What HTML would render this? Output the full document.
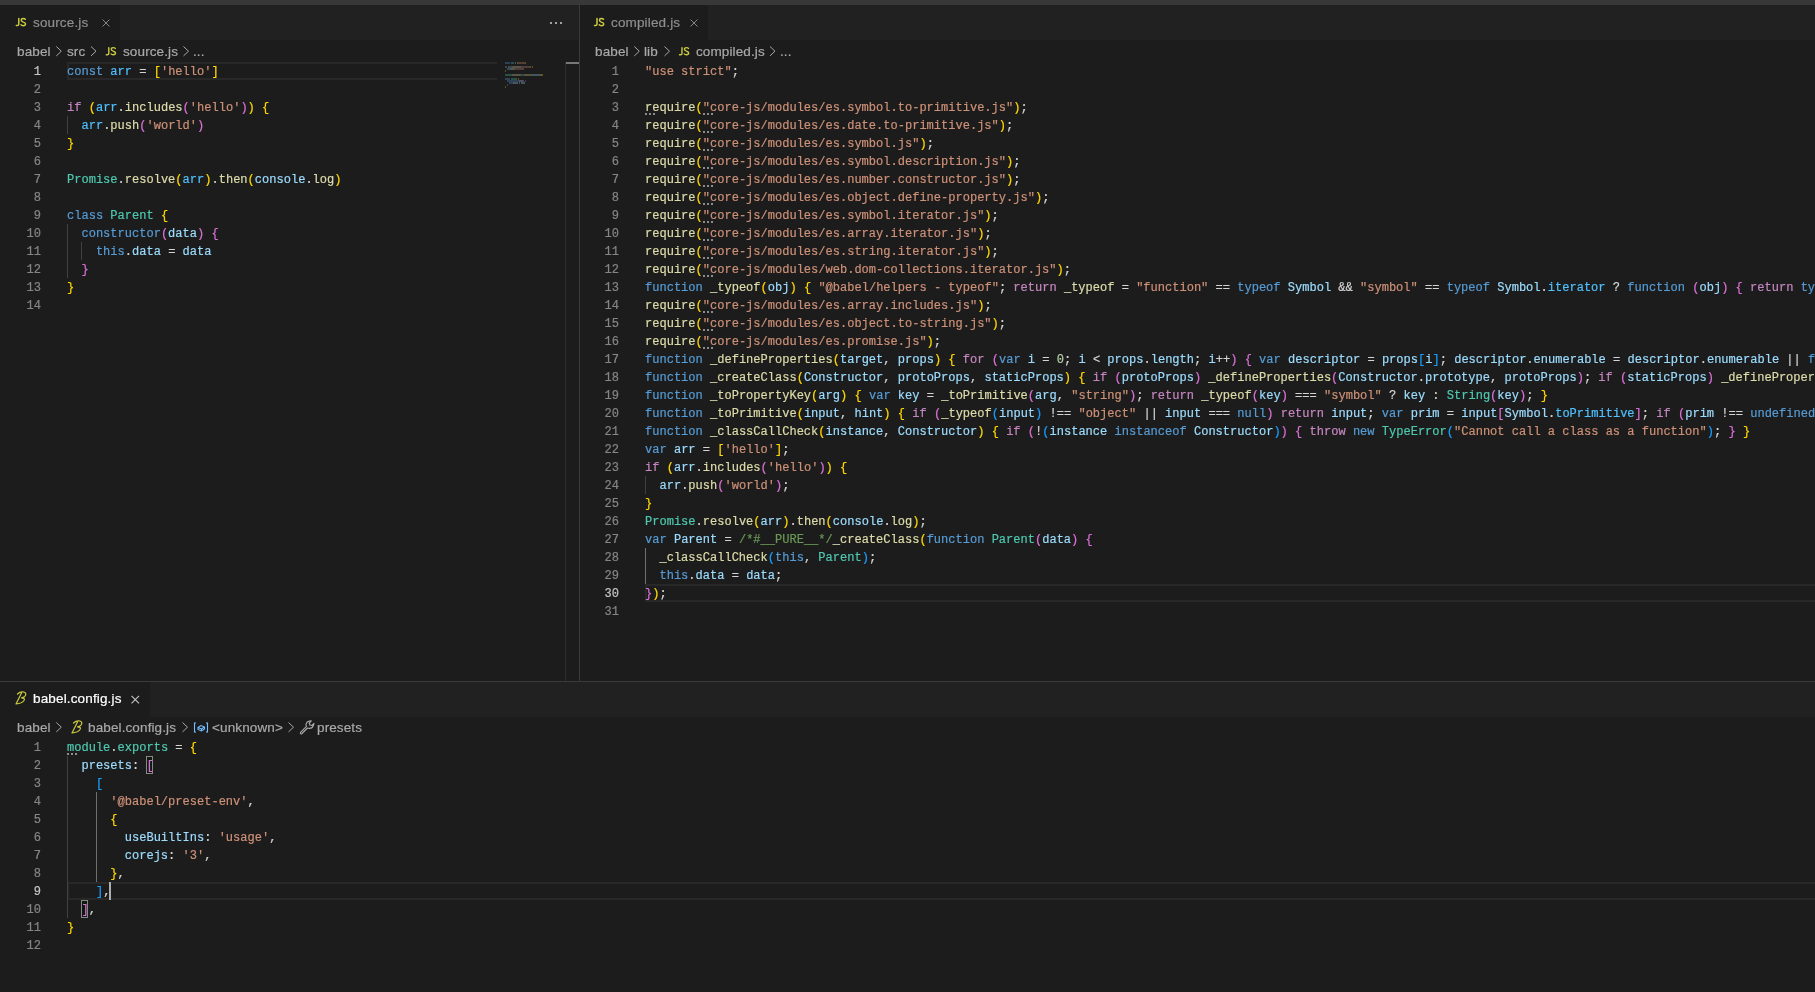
<!DOCTYPE html>
<html><head><meta charset="utf-8"><style>
html,body{margin:0;padding:0}
body{width:1815px;height:992px;overflow:hidden;position:relative;background:#1c1c1c;font-family:"Liberation Sans",sans-serif}
.abs{position:absolute}
.strip{left:0;top:0;width:1815px;height:5px;background:#383838}
.tabbar{background:#212121}
.tab{background:#1c1c1c}
.tt{position:absolute;font-size:13.5px;letter-spacing:0.15px;line-height:16px;color:#8e8e8e;white-space:pre;will-change:transform;-webkit-text-stroke:0.2px currentColor}
.bc{position:absolute;font-size:13.5px;letter-spacing:0.12px;line-height:16px;color:#a9a9a9;white-space:pre;will-change:transform;-webkit-text-stroke:0.2px currentColor}
.vdiv{background:#3a3a3a}
.cl,.ln{position:absolute;height:18px;line-height:18px;font-family:"Liberation Mono",monospace;font-size:12.04px;white-space:pre;color:#d4d4d4;will-change:transform;-webkit-text-stroke:0.2px currentColor}
.ln{text-align:right;color:#858585}
.ln.cur{color:#c6c6c6}
.k{color:#569cd6}.c{color:#c586c0}.v{color:#9cdcfe}.cv{color:#4fc1ff}.f{color:#dcdcaa}
.s{color:#ce9178}.t{color:#4ec9b0}.cm{color:#6a9955}.n{color:#b5cea8}
.b1{color:#ffd700}.b2{color:#da70d6}.b3{color:#179fff}
.hl{position:absolute;border:2px solid #282828;border-right:none;box-sizing:border-box;height:18px}
.guide{position:absolute;width:1px;background:#404040}
.guide.act{background:#707070}
.dots{position:absolute;height:2px;width:10px;background:repeating-linear-gradient(90deg,#8c8c8c 0 2px,transparent 2px 4px)}
svg{position:absolute;overflow:visible}

</style></head><body>
<div class="abs strip"></div>
<!-- ============ top-left group ============ -->
<div class="abs tabbar" style="left:0;top:5px;width:579px;height:35px"></div>
<div class="abs tab" style="left:0;top:5px;width:120px;height:35px"></div>
<svg style="left:0;top:0" width="1" height="1"><g fill="none" stroke="#cbcb41" stroke-width="1.5" stroke-linecap="round">
<path d="M18.8 18.5 V24 Q18.8 25.6 17.2 25.6 H16.3"/>
<path d="M25.3 19.3 Q24.6 18.5 23.2 18.5 Q21.3 18.5 21.3 20.2 Q21.3 21.5 23.3 22.1 Q25.5 22.7 25.5 24 Q25.5 25.7 23.2 25.7 Q21.8 25.7 21 24.8"/>
</g></svg>
<div class="tt" style="left:33px;top:15px">source.js</div>
<svg style="left:0;top:0" width="1" height="1"><g stroke="#858585" stroke-width="1"><path d="M102.5 19.5 L109.5 26.5 M109.5 19.5 L102.5 26.5"/></g></svg>
<svg style="left:0;top:0" width="1" height="1"><g fill="#a3a3a3"><rect x="550" y="22" width="2" height="2"/><rect x="555" y="22" width="2" height="2"/><rect x="560" y="22" width="2" height="2"/></g></svg>
<!-- breadcrumbs -->
<div class="bc" style="left:17px;top:44px">babel</div>
<svg style="left:0;top:0" width="1" height="1"><g fill="none" stroke="#a9a9a9" stroke-width="1"><path d="M56.3 46.5 L61.3 51.2 L56.3 55.9"/><path d="M91 46.5 L96 51.2 L91 55.9"/></g></svg>
<div class="bc" style="left:67px;top:44px">src</div>
<svg style="left:0;top:0" width="1" height="1"><g fill="none" stroke="#cbcb41" stroke-width="1.4" stroke-linecap="round">
<path d="M108.8 47.6 V53.2 Q108.8 54.8 107.2 54.8 H106.3"/>
<path d="M115.3 48.4 Q114.6 47.6 113.2 47.6 Q111.3 47.6 111.3 49.3 Q111.3 50.6 113.3 51.2 Q115.5 51.8 115.5 53.1 Q115.5 54.8 113.2 54.8 Q111.8 54.8 111 53.9"/>
</g></svg>
<div class="bc" style="left:123px;top:44px">source.js</div>
<svg style="left:0;top:0" width="1" height="1"><g fill="none" stroke="#a9a9a9" stroke-width="1"><path d="M183.5 46.5 L188.5 51.2 L183.5 55.9"/></g></svg>
<div class="bc" style="left:193px;top:44px">...</div>
<!-- ============ top-right group ============ -->
<div class="abs tabbar" style="left:580px;top:5px;width:1235px;height:35px"></div>
<div class="abs tab" style="left:580px;top:5px;width:128px;height:35px"></div>
<svg style="left:0;top:0" width="1" height="1"><g fill="none" stroke="#cbcb41" stroke-width="1.5" stroke-linecap="round">
<path d="M597 18.5 V24 Q597 25.6 595.4 25.6 H594.5"/>
<path d="M603.5 19.3 Q602.8 18.5 601.4 18.5 Q599.5 18.5 599.5 20.2 Q599.5 21.5 601.5 22.1 Q603.7 22.7 603.7 24 Q603.7 25.7 601.4 25.7 Q600 25.7 599.2 24.8"/>
</g></svg>
<div class="tt" style="left:611px;top:15px">compiled.js</div>
<svg style="left:0;top:0" width="1" height="1"><g stroke="#858585" stroke-width="1"><path d="M690.5 19.5 L697.5 26.5 M697.5 19.5 L690.5 26.5"/></g></svg>
<div class="bc" style="left:595px;top:44px">babel</div>
<svg style="left:0;top:0" width="1" height="1"><g fill="none" stroke="#a9a9a9" stroke-width="1"><path d="M634.3 46.5 L639.3 51.2 L634.3 55.9"/><path d="M664.5 46.5 L669.5 51.2 L664.5 55.9"/></g></svg>
<div class="bc" style="left:644px;top:44px">lib</div>
<svg style="left:0;top:0" width="1" height="1"><g fill="none" stroke="#cbcb41" stroke-width="1.4" stroke-linecap="round">
<path d="M682 47.6 V53.2 Q682 54.8 680.4 54.8 H679.5"/>
<path d="M688.5 48.4 Q687.8 47.6 686.4 47.6 Q684.5 47.6 684.5 49.3 Q684.5 50.6 686.5 51.2 Q688.7 51.8 688.7 53.1 Q688.7 54.8 686.4 54.8 Q685 54.8 684.2 53.9"/>
</g></svg>
<div class="bc" style="left:696px;top:44px">compiled.js</div>
<svg style="left:0;top:0" width="1" height="1"><g fill="none" stroke="#a9a9a9" stroke-width="1"><path d="M770 46.5 L775 51.2 L770 55.9"/></g></svg>
<div class="bc" style="left:780px;top:44px">...</div>
<!-- dividers / scrollbar -->
<div class="abs vdiv" style="left:579px;top:5px;width:1px;height:677px"></div>
<div class="abs vdiv" style="left:0;top:681px;width:1815px;height:1px"></div>
<div class="abs" style="left:565px;top:62px;width:1px;height:619px;background:#2e2e2e"></div>
<div class="abs" style="left:566px;top:62px;width:13px;height:2px;background:#787878"></div>
<!-- ============ bottom group ============ -->
<div class="abs tabbar" style="left:0;top:682px;width:1815px;height:35px"></div>
<div class="abs tab" style="left:0;top:682px;width:150px;height:35px"></div>
<svg style="left:0;top:0" width="1" height="1"><g fill="none" stroke="#cbcb41" stroke-width="1.2" stroke-linecap="round" stroke-linejoin="round">
<path d="M17.5 694 Q20 691.5 24 692 Q26.5 692.8 25.5 695.5 Q24.5 697.5 21.5 697.8 Q25.5 697.8 24 700.5 Q22 703.5 16 704 L21.5 693"/>
</g></svg>
<div class="tt" style="left:33px;top:691px;color:#ffffff">babel.config.js</div>
<svg style="left:0;top:0" width="1" height="1"><g stroke="#c5c5c5" stroke-width="1.1"><path d="M131.5 695.8 L139 703.3 M139 695.8 L131.5 703.3"/></g></svg>
<div class="bc" style="left:17px;top:720px">babel</div>
<svg style="left:0;top:0" width="1" height="1"><g fill="none" stroke="#a9a9a9" stroke-width="1"><path d="M56.3 722.5 L61.3 727.2 L56.3 731.9"/><path d="M182.5 722.5 L187.5 727.2 L182.5 731.9"/><path d="M288.5 722.5 L293.5 727.2 L288.5 731.9"/></g></svg>
<svg style="left:0;top:0" width="1" height="1"><g fill="none" stroke="#cbcb41" stroke-width="1.2" stroke-linecap="round" stroke-linejoin="round">
<path d="M73.5 723 Q76 720.5 80 721 Q82.5 721.8 81.5 724.5 Q80.5 726.5 77.5 726.8 Q81.5 726.8 80 729.5 Q78 732.5 72 733 L77.5 722"/>
</g></svg>
<div class="bc" style="left:88px;top:720px">babel.config.js</div>
<svg style="left:0;top:0" width="1" height="1"><g fill="none" stroke="#75beff" stroke-width="1.1">
<path d="M196 723 H194.5 V732 H196"/><path d="M206 723 H207.5 V732 H206"/>
<path d="M198 727.5 L201 725.5 L204.5 727 V729 L201.5 731 L198 729.5 Z"/><path d="M198 727.5 L201.5 729 L204.5 727 M201.5 729 V731"/>
</g></svg>
<div class="bc" style="left:212px;top:720px">&lt;unknown&gt;</div>
<svg style="left:0;top:0" width="1" height="1"><g fill="none" stroke="#a9a9a9" stroke-width="1.1" stroke-linejoin="round">
<path d="M309.5 721 Q306.5 721.5 306 724.5 Q306 725.5 306.5 726.3 L300.5 732.3 Q300 733.8 301.5 734 L307.5 728 Q308.5 728.5 309.5 728.4 Q312.8 728 313.5 725 L314 723.5 L311.8 725.5 L309.8 725 L309.2 723 L311.3 720.8 Z"/>
</g></svg>
<div class="bc" style="left:317px;top:720px">presets</div>
<!-- line highlights -->
<div class="hl" style="left:67px;top:62px;width:430px"></div>
<div class="hl" style="left:645px;top:584px;width:1170px"></div>
<div class="hl" style="left:67px;top:882px;width:1748px"></div>
<div class="guide" style="left:67px;top:116px;height:18px"></div>
<div class="guide" style="left:67px;top:224px;height:54px"></div>
<div class="guide" style="left:81px;top:242px;height:18px"></div>
<div class="guide" style="left:645px;top:476px;height:18px"></div>
<div class="guide act" style="left:645px;top:548px;height:36px"></div>
<div class="guide" style="left:67px;top:756px;height:162px"></div>
<div class="guide act" style="left:96px;top:792px;height:90px"></div>
<div class="dots" style="left:703px;top:113px"></div>
<div class="dots" style="left:703px;top:131px"></div>
<div class="dots" style="left:703px;top:149px"></div>
<div class="dots" style="left:703px;top:167px"></div>
<div class="dots" style="left:703px;top:185px"></div>
<div class="dots" style="left:703px;top:203px"></div>
<div class="dots" style="left:703px;top:221px"></div>
<div class="dots" style="left:703px;top:239px"></div>
<div class="dots" style="left:703px;top:257px"></div>
<div class="dots" style="left:703px;top:275px"></div>
<div class="dots" style="left:703px;top:311px"></div>
<div class="dots" style="left:703px;top:329px"></div>
<div class="dots" style="left:703px;top:347px"></div>
<div class="dots" style="left:645px;top:113px"></div>
<div class="dots" style="left:67px;top:753px"></div>
<div class="abs" style="left:146px;top:756px;width:5px;height:16px;border:1px solid #888;background:#0e1a0e"></div>
<div class="abs" style="left:81px;top:900px;width:5px;height:16px;border:1px solid #888;background:#0e1a0e"></div>
<div class="ln cur" style="top:63px;left:0px;width:41px">1</div>
<div class="cl" style="top:63px;left:67px"><span class="k">const</span> <span class="cv">arr</span> = <span class="b1">[</span><span class="s">&#x27;hello&#x27;</span><span class="b1">]</span></div>
<div class="ln" style="top:81px;left:0px;width:41px">2</div>
<div class="ln" style="top:99px;left:0px;width:41px">3</div>
<div class="cl" style="top:99px;left:67px"><span class="c">if</span> <span class="b1">(</span><span class="cv">arr</span>.<span class="f">includes</span><span class="b2">(</span><span class="s">&#x27;hello&#x27;</span><span class="b2">)</span><span class="b1">)</span> <span class="b1">{</span></div>
<div class="ln" style="top:117px;left:0px;width:41px">4</div>
<div class="cl" style="top:117px;left:67px">  <span class="cv">arr</span>.<span class="f">push</span><span class="b2">(</span><span class="s">&#x27;world&#x27;</span><span class="b2">)</span></div>
<div class="ln" style="top:135px;left:0px;width:41px">5</div>
<div class="cl" style="top:135px;left:67px"><span class="b1">}</span></div>
<div class="ln" style="top:153px;left:0px;width:41px">6</div>
<div class="ln" style="top:171px;left:0px;width:41px">7</div>
<div class="cl" style="top:171px;left:67px"><span class="t">Promise</span>.<span class="f">resolve</span><span class="b1">(</span><span class="cv">arr</span><span class="b1">)</span>.<span class="f">then</span><span class="b1">(</span><span class="v">console</span>.<span class="f">log</span><span class="b1">)</span></div>
<div class="ln" style="top:189px;left:0px;width:41px">8</div>
<div class="ln" style="top:207px;left:0px;width:41px">9</div>
<div class="cl" style="top:207px;left:67px"><span class="k">class</span> <span class="t">Parent</span> <span class="b1">{</span></div>
<div class="ln" style="top:225px;left:0px;width:41px">10</div>
<div class="cl" style="top:225px;left:67px">  <span class="k">constructor</span><span class="b2">(</span><span class="v">data</span><span class="b2">)</span> <span class="b2">{</span></div>
<div class="ln" style="top:243px;left:0px;width:41px">11</div>
<div class="cl" style="top:243px;left:67px">    <span class="k">this</span>.<span class="v">data</span> = <span class="v">data</span></div>
<div class="ln" style="top:261px;left:0px;width:41px">12</div>
<div class="cl" style="top:261px;left:67px">  <span class="b2">}</span></div>
<div class="ln" style="top:279px;left:0px;width:41px">13</div>
<div class="cl" style="top:279px;left:67px"><span class="b1">}</span></div>
<div class="ln" style="top:297px;left:0px;width:41px">14</div>
<div class="ln" style="top:63px;left:580px;width:39px">1</div>
<div class="cl" style="top:63px;left:645px"><span class="s">&quot;use strict&quot;</span>;</div>
<div class="ln" style="top:81px;left:580px;width:39px">2</div>
<div class="ln" style="top:99px;left:580px;width:39px">3</div>
<div class="cl" style="top:99px;left:645px"><span class="f">require</span><span class="b1">(</span><span class="s">&quot;core-js/modules/es.symbol.to-primitive.js&quot;</span><span class="b1">)</span>;</div>
<div class="ln" style="top:117px;left:580px;width:39px">4</div>
<div class="cl" style="top:117px;left:645px"><span class="f">require</span><span class="b1">(</span><span class="s">&quot;core-js/modules/es.date.to-primitive.js&quot;</span><span class="b1">)</span>;</div>
<div class="ln" style="top:135px;left:580px;width:39px">5</div>
<div class="cl" style="top:135px;left:645px"><span class="f">require</span><span class="b1">(</span><span class="s">&quot;core-js/modules/es.symbol.js&quot;</span><span class="b1">)</span>;</div>
<div class="ln" style="top:153px;left:580px;width:39px">6</div>
<div class="cl" style="top:153px;left:645px"><span class="f">require</span><span class="b1">(</span><span class="s">&quot;core-js/modules/es.symbol.description.js&quot;</span><span class="b1">)</span>;</div>
<div class="ln" style="top:171px;left:580px;width:39px">7</div>
<div class="cl" style="top:171px;left:645px"><span class="f">require</span><span class="b1">(</span><span class="s">&quot;core-js/modules/es.number.constructor.js&quot;</span><span class="b1">)</span>;</div>
<div class="ln" style="top:189px;left:580px;width:39px">8</div>
<div class="cl" style="top:189px;left:645px"><span class="f">require</span><span class="b1">(</span><span class="s">&quot;core-js/modules/es.object.define-property.js&quot;</span><span class="b1">)</span>;</div>
<div class="ln" style="top:207px;left:580px;width:39px">9</div>
<div class="cl" style="top:207px;left:645px"><span class="f">require</span><span class="b1">(</span><span class="s">&quot;core-js/modules/es.symbol.iterator.js&quot;</span><span class="b1">)</span>;</div>
<div class="ln" style="top:225px;left:580px;width:39px">10</div>
<div class="cl" style="top:225px;left:645px"><span class="f">require</span><span class="b1">(</span><span class="s">&quot;core-js/modules/es.array.iterator.js&quot;</span><span class="b1">)</span>;</div>
<div class="ln" style="top:243px;left:580px;width:39px">11</div>
<div class="cl" style="top:243px;left:645px"><span class="f">require</span><span class="b1">(</span><span class="s">&quot;core-js/modules/es.string.iterator.js&quot;</span><span class="b1">)</span>;</div>
<div class="ln" style="top:261px;left:580px;width:39px">12</div>
<div class="cl" style="top:261px;left:645px"><span class="f">require</span><span class="b1">(</span><span class="s">&quot;core-js/modules/web.dom-collections.iterator.js&quot;</span><span class="b1">)</span>;</div>
<div class="ln" style="top:279px;left:580px;width:39px">13</div>
<div class="cl" style="top:279px;left:645px"><span class="k">function</span> <span class="f">_typeof</span><span class="b1">(</span><span class="v">obj</span><span class="b1">)</span> <span class="b1">{</span> <span class="s">&quot;@babel/helpers - typeof&quot;</span>; <span class="c">return</span> <span class="f">_typeof</span> = <span class="s">&quot;function&quot;</span> == <span class="k">typeof</span> <span class="v">Symbol</span> &amp;&amp; <span class="s">&quot;symbol&quot;</span> == <span class="k">typeof</span> <span class="v">Symbol</span>.<span class="cv">iterator</span> ? <span class="k">function</span> <span class="b2">(</span><span class="v">obj</span><span class="b2">)</span> <span class="b2">{</span> <span class="c">return</span> <span class="k">typeof</span> <span class="v">obj</span>; <span class="b2">}</span> : <span class="k">function</span> <span class="b2">(</span><span class="v">obj</span><span class="b2">)</span> <span class="b2">{</span> <span class="c">return</span> <span class="v">obj</span> &amp;&amp; <span class="s">&quot;function&quot;</span> == <span class="k">typeof</span> <span class="v">Symbol</span> &amp;&amp; <span class="v">obj</span>.<span class="v">constructor</span> === <span class="v">Symbol</span></div>
<div class="ln" style="top:297px;left:580px;width:39px">14</div>
<div class="cl" style="top:297px;left:645px"><span class="f">require</span><span class="b1">(</span><span class="s">&quot;core-js/modules/es.array.includes.js&quot;</span><span class="b1">)</span>;</div>
<div class="ln" style="top:315px;left:580px;width:39px">15</div>
<div class="cl" style="top:315px;left:645px"><span class="f">require</span><span class="b1">(</span><span class="s">&quot;core-js/modules/es.object.to-string.js&quot;</span><span class="b1">)</span>;</div>
<div class="ln" style="top:333px;left:580px;width:39px">16</div>
<div class="cl" style="top:333px;left:645px"><span class="f">require</span><span class="b1">(</span><span class="s">&quot;core-js/modules/es.promise.js&quot;</span><span class="b1">)</span>;</div>
<div class="ln" style="top:351px;left:580px;width:39px">17</div>
<div class="cl" style="top:351px;left:645px"><span class="k">function</span> <span class="f">_defineProperties</span><span class="b1">(</span><span class="v">target</span>, <span class="v">props</span><span class="b1">)</span> <span class="b1">{</span> <span class="c">for</span> <span class="b2">(</span><span class="k">var</span> <span class="v">i</span> = <span class="n">0</span>; <span class="v">i</span> &lt; <span class="v">props</span>.<span class="v">length</span>; <span class="v">i</span>++<span class="b2">)</span> <span class="b2">{</span> <span class="k">var</span> <span class="v">descriptor</span> = <span class="v">props</span><span class="b3">[</span><span class="v">i</span><span class="b3">]</span>; <span class="v">descriptor</span>.<span class="v">enumerable</span> = <span class="v">descriptor</span>.<span class="v">enumerable</span> || <span class="k">false</span>; <span class="v">descriptor</span>.<span class="v">configurable</span> = <span class="k">true</span>;</div>
<div class="ln" style="top:369px;left:580px;width:39px">18</div>
<div class="cl" style="top:369px;left:645px"><span class="k">function</span> <span class="f">_createClass</span><span class="b1">(</span><span class="v">Constructor</span>, <span class="v">protoProps</span>, <span class="v">staticProps</span><span class="b1">)</span> <span class="b1">{</span> <span class="c">if</span> <span class="b2">(</span><span class="v">protoProps</span><span class="b2">)</span> <span class="f">_defineProperties</span><span class="b2">(</span><span class="v">Constructor</span>.<span class="v">prototype</span>, <span class="v">protoProps</span><span class="b2">)</span>; <span class="c">if</span> <span class="b2">(</span><span class="v">staticProps</span><span class="b2">)</span> <span class="f">_defineProperties</span><span class="b2">(</span><span class="v">Constructor</span>, <span class="v">staticProps</span><span class="b2">)</span>;</div>
<div class="ln" style="top:387px;left:580px;width:39px">19</div>
<div class="cl" style="top:387px;left:645px"><span class="k">function</span> <span class="f">_toPropertyKey</span><span class="b1">(</span><span class="v">arg</span><span class="b1">)</span> <span class="b1">{</span> <span class="k">var</span> <span class="v">key</span> = <span class="f">_toPrimitive</span><span class="b2">(</span><span class="v">arg</span>, <span class="s">&quot;string&quot;</span><span class="b2">)</span>; <span class="c">return</span> <span class="f">_typeof</span><span class="b2">(</span><span class="v">key</span><span class="b2">)</span> === <span class="s">&quot;symbol&quot;</span> ? <span class="v">key</span> : <span class="t">String</span><span class="b2">(</span><span class="v">key</span><span class="b2">)</span>; <span class="b1">}</span></div>
<div class="ln" style="top:405px;left:580px;width:39px">20</div>
<div class="cl" style="top:405px;left:645px"><span class="k">function</span> <span class="f">_toPrimitive</span><span class="b1">(</span><span class="v">input</span>, <span class="v">hint</span><span class="b1">)</span> <span class="b1">{</span> <span class="c">if</span> <span class="b2">(</span><span class="f">_typeof</span><span class="b3">(</span><span class="v">input</span><span class="b3">)</span> !== <span class="s">&quot;object&quot;</span> || <span class="v">input</span> === <span class="k">null</span><span class="b2">)</span> <span class="c">return</span> <span class="v">input</span>; <span class="k">var</span> <span class="v">prim</span> = <span class="v">input</span><span class="b2">[</span><span class="v">Symbol</span>.<span class="cv">toPrimitive</span><span class="b2">]</span>; <span class="c">if</span> <span class="b2">(</span><span class="v">prim</span> !== <span class="k">undefined</span><span class="b2">)</span> <span class="b2">{</span></div>
<div class="ln" style="top:423px;left:580px;width:39px">21</div>
<div class="cl" style="top:423px;left:645px"><span class="k">function</span> <span class="f">_classCallCheck</span><span class="b1">(</span><span class="v">instance</span>, <span class="v">Constructor</span><span class="b1">)</span> <span class="b1">{</span> <span class="c">if</span> <span class="b2">(</span>!<span class="b3">(</span><span class="v">instance</span> <span class="k">instanceof</span> <span class="v">Constructor</span><span class="b3">)</span><span class="b2">)</span> <span class="b2">{</span> <span class="c">throw</span> <span class="k">new</span> <span class="t">TypeError</span><span class="b3">(</span><span class="s">&quot;Cannot call a class as a function&quot;</span><span class="b3">)</span>; <span class="b2">}</span> <span class="b1">}</span></div>
<div class="ln" style="top:441px;left:580px;width:39px">22</div>
<div class="cl" style="top:441px;left:645px"><span class="k">var</span> <span class="v">arr</span> = <span class="b1">[</span><span class="s">&#x27;hello&#x27;</span><span class="b1">]</span>;</div>
<div class="ln" style="top:459px;left:580px;width:39px">23</div>
<div class="cl" style="top:459px;left:645px"><span class="c">if</span> <span class="b1">(</span><span class="v">arr</span>.<span class="f">includes</span><span class="b2">(</span><span class="s">&#x27;hello&#x27;</span><span class="b2">)</span><span class="b1">)</span> <span class="b1">{</span></div>
<div class="ln" style="top:477px;left:580px;width:39px">24</div>
<div class="cl" style="top:477px;left:645px">  <span class="v">arr</span>.<span class="f">push</span><span class="b2">(</span><span class="s">&#x27;world&#x27;</span><span class="b2">)</span>;</div>
<div class="ln" style="top:495px;left:580px;width:39px">25</div>
<div class="cl" style="top:495px;left:645px"><span class="b1">}</span></div>
<div class="ln" style="top:513px;left:580px;width:39px">26</div>
<div class="cl" style="top:513px;left:645px"><span class="t">Promise</span>.<span class="f">resolve</span><span class="b1">(</span><span class="v">arr</span><span class="b1">)</span>.<span class="f">then</span><span class="b1">(</span><span class="v">console</span>.<span class="f">log</span><span class="b1">)</span>;</div>
<div class="ln" style="top:531px;left:580px;width:39px">27</div>
<div class="cl" style="top:531px;left:645px"><span class="k">var</span> <span class="v">Parent</span> = <span class="cm">/*#__PURE__*/</span><span class="f">_createClass</span><span class="b1">(</span><span class="k">function</span> <span class="t">Parent</span><span class="b2">(</span><span class="v">data</span><span class="b2">)</span> <span class="b2">{</span></div>
<div class="ln" style="top:549px;left:580px;width:39px">28</div>
<div class="cl" style="top:549px;left:645px">  <span class="f">_classCallCheck</span><span class="b3">(</span><span class="k">this</span>, <span class="t">Parent</span><span class="b3">)</span>;</div>
<div class="ln" style="top:567px;left:580px;width:39px">29</div>
<div class="cl" style="top:567px;left:645px">  <span class="k">this</span>.<span class="v">data</span> = <span class="v">data</span>;</div>
<div class="ln cur" style="top:585px;left:580px;width:39px">30</div>
<div class="cl" style="top:585px;left:645px"><span class="b2">}</span><span class="b1">)</span>;</div>
<div class="ln" style="top:603px;left:580px;width:39px">31</div>
<div class="ln" style="top:739px;left:0px;width:41px">1</div>
<div class="cl" style="top:739px;left:67px"><span class="t">module</span>.<span class="t">exports</span> = <span class="b1">{</span></div>
<div class="ln" style="top:757px;left:0px;width:41px">2</div>
<div class="cl" style="top:757px;left:67px">  <span class="v">presets</span>: <span class="b2">[</span></div>
<div class="ln" style="top:775px;left:0px;width:41px">3</div>
<div class="cl" style="top:775px;left:67px">    <span class="b3">[</span></div>
<div class="ln" style="top:793px;left:0px;width:41px">4</div>
<div class="cl" style="top:793px;left:67px">      <span class="s">&#x27;@babel/preset-env&#x27;</span>,</div>
<div class="ln" style="top:811px;left:0px;width:41px">5</div>
<div class="cl" style="top:811px;left:67px">      <span class="b1">{</span></div>
<div class="ln" style="top:829px;left:0px;width:41px">6</div>
<div class="cl" style="top:829px;left:67px">        <span class="v">useBuiltIns</span>: <span class="s">&#x27;usage&#x27;</span>,</div>
<div class="ln" style="top:847px;left:0px;width:41px">7</div>
<div class="cl" style="top:847px;left:67px">        <span class="v">corejs</span>: <span class="s">&#x27;3&#x27;</span>,</div>
<div class="ln" style="top:865px;left:0px;width:41px">8</div>
<div class="cl" style="top:865px;left:67px">      <span class="b1">}</span>,</div>
<div class="ln cur" style="top:883px;left:0px;width:41px">9</div>
<div class="cl" style="top:883px;left:67px">    <span class="b3">]</span>,</div>
<div class="ln" style="top:901px;left:0px;width:41px">10</div>
<div class="cl" style="top:901px;left:67px">  <span class="b2">]</span>,</div>
<div class="ln" style="top:919px;left:0px;width:41px">11</div>
<div class="cl" style="top:919px;left:67px"><span class="b1">}</span></div>
<div class="ln" style="top:937px;left:0px;width:41px">12</div>
<div class="abs" style="left:109px;top:882px;width:2px;height:18px;background:#aeafad"></div>
<svg style="left:0;top:0;opacity:0.3" width="1" height="1"><rect x="505" y="62" width="5" height="2" fill="#569cd6"/><rect x="511" y="62" width="3" height="2" fill="#4fc1ff"/><rect x="515" y="62" width="1" height="2" fill="#d4d4d4"/><rect x="517" y="62" width="1" height="2" fill="#ffd700"/><rect x="518" y="62" width="7" height="2" fill="#ce9178"/><rect x="525" y="62" width="1" height="2" fill="#ffd700"/><rect x="505" y="66" width="2" height="2" fill="#c586c0"/><rect x="508" y="66" width="1" height="2" fill="#ffd700"/><rect x="509" y="66" width="3" height="2" fill="#4fc1ff"/><rect x="512" y="66" width="1" height="2" fill="#d4d4d4"/><rect x="513" y="66" width="8" height="2" fill="#dcdcaa"/><rect x="521" y="66" width="1" height="2" fill="#da70d6"/><rect x="522" y="66" width="7" height="2" fill="#ce9178"/><rect x="529" y="66" width="1" height="2" fill="#da70d6"/><rect x="530" y="66" width="1" height="2" fill="#ffd700"/><rect x="532" y="66" width="1" height="2" fill="#ffd700"/><rect x="507" y="68" width="3" height="2" fill="#4fc1ff"/><rect x="510" y="68" width="1" height="2" fill="#d4d4d4"/><rect x="511" y="68" width="4" height="2" fill="#dcdcaa"/><rect x="515" y="68" width="1" height="2" fill="#da70d6"/><rect x="516" y="68" width="7" height="2" fill="#ce9178"/><rect x="523" y="68" width="1" height="2" fill="#da70d6"/><rect x="505" y="70" width="1" height="2" fill="#ffd700"/><rect x="505" y="74" width="7" height="2" fill="#4ec9b0"/><rect x="512" y="74" width="1" height="2" fill="#d4d4d4"/><rect x="513" y="74" width="7" height="2" fill="#dcdcaa"/><rect x="520" y="74" width="1" height="2" fill="#ffd700"/><rect x="521" y="74" width="3" height="2" fill="#4fc1ff"/><rect x="524" y="74" width="1" height="2" fill="#ffd700"/><rect x="525" y="74" width="1" height="2" fill="#d4d4d4"/><rect x="526" y="74" width="4" height="2" fill="#dcdcaa"/><rect x="530" y="74" width="1" height="2" fill="#ffd700"/><rect x="531" y="74" width="7" height="2" fill="#9cdcfe"/><rect x="538" y="74" width="1" height="2" fill="#d4d4d4"/><rect x="539" y="74" width="3" height="2" fill="#dcdcaa"/><rect x="542" y="74" width="1" height="2" fill="#ffd700"/><rect x="505" y="78" width="5" height="2" fill="#569cd6"/><rect x="511" y="78" width="6" height="2" fill="#4ec9b0"/><rect x="518" y="78" width="1" height="2" fill="#ffd700"/><rect x="507" y="80" width="11" height="2" fill="#569cd6"/><rect x="518" y="80" width="1" height="2" fill="#da70d6"/><rect x="519" y="80" width="4" height="2" fill="#9cdcfe"/><rect x="523" y="80" width="1" height="2" fill="#da70d6"/><rect x="525" y="80" width="1" height="2" fill="#da70d6"/><rect x="509" y="82" width="4" height="2" fill="#569cd6"/><rect x="513" y="82" width="1" height="2" fill="#d4d4d4"/><rect x="514" y="82" width="4" height="2" fill="#9cdcfe"/><rect x="519" y="82" width="1" height="2" fill="#d4d4d4"/><rect x="521" y="82" width="4" height="2" fill="#9cdcfe"/><rect x="507" y="84" width="1" height="2" fill="#da70d6"/><rect x="505" y="86" width="1" height="2" fill="#ffd700"/></svg>

</body></html>
